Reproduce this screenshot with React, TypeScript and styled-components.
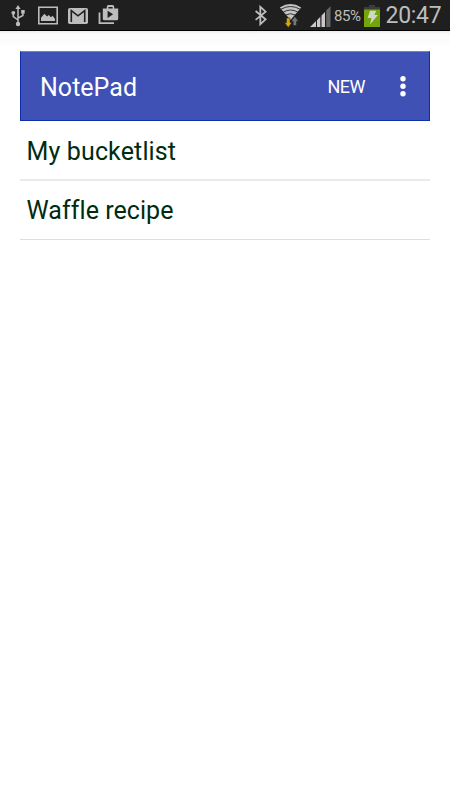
import React from "react";
import styled, { createGlobalStyle } from "styled-components";

const GlobalStyle = createGlobalStyle`
  * { box-sizing: border-box; }
  body { margin: 0; background: #fff; font-family: Roboto, sans-serif; }
`;

const Screen = styled.div`
  width: 450px;
  height: 800px;
  display: flex;
  flex-direction: column;
  overflow: hidden;
  background: linear-gradient(#ececec 31px, #fafafa 34px, #fdfdfd 44px, #fff 48px);
`;

const StatusBar = styled.header`
  height: 31px;
  flex: none;
  display: flex;
  justify-content: space-between;
  padding: 0 9px 0 8px;
  background: #1f1f1f;
  border-bottom: 1px solid #000;
  color: #bdbdbd;
`;

const IconGroup = styled.div`
  display: flex;
  align-items: flex-start;
`;

const Icon = styled.svg`
  display: block;
  flex: none;
`;

const StatusText = styled.span<{ $size: number; $width: number; $gap: number; $spacing?: number }>`
  width: ${({ $width }) => $width}px;
  margin-left: ${({ $gap }) => $gap}px;
  font-size: ${({ $size }) => $size}px;
  letter-spacing: ${({ $spacing = 0 }) => $spacing}px;
  line-height: 32px;
  white-space: nowrap;
`;

const Content = styled.main`
  margin: 20px 20px 0;
`;

const Toolbar = styled.div`
  height: 70px;
  display: flex;
  align-items: center;
  padding: 0 16.5px 0 19px;
  background: #3f51b5;
  border: 1px solid #0d2fae;
  border-top-color: #7380c6;
  color: #fff;
`;

const Title = styled.h1`
  margin: 3px 0 0;
  flex: 1;
  font-size: 25px;
  font-weight: 400;
  line-height: 32px;
  letter-spacing: 0.02px;
`;

const ToolbarButton = styled.button`
  border: 0;
  padding: 0;
  margin: 2px 27.5px 0 0;
  background: none;
  color: inherit;
  font: 400 18px/24px Roboto, sans-serif;
  letter-spacing: -0.5px;
`;

const MenuButton = styled.button`
  display: flex;
  justify-content: center;
  width: 20px;
  padding: 0;
  border: 0;
  background: none;
  color: inherit;
`;

const NoteList = styled.ul`
  margin: 0;
  padding: 0;
  list-style: none;
`;

const NoteItem = styled.li<{ $spacing: number }>`
  height: 59px;
  padding: 0 6.5px;
  border-bottom: 1px solid #dedede;
  color: #002b12;
  font-size: 25px;
  line-height: 59px;
  letter-spacing: ${({ $spacing }) => $spacing}px;

  &:first-child {
    height: 60px;
    padding-top: 1px;
    border-bottom: 2px solid #ebebeb;
  }
`;

const notes = [
  { title: "My bucketlist", spacing: 0.14 },
  { title: "Waffle recipe", spacing: 0.06 },
];

export default function App() {
  return (
    <>
      <GlobalStyle />
      <Screen>
        <StatusBar>
          <IconGroup>
            <Icon width="122" height="30" viewBox="8 0 122 30" fill="#bdbdbd">
              <g stroke="#bdbdbd" strokeWidth="1.5" fill="none">
                <path d="M18 8v16M13.3 13v3.5l4.7 3.5M22.9 11v4.5L18 18.2" />
              </g>
              <path d="M18 5l2.6 4h-5.2z" />
              <circle cx="18" cy="24" r="2.2" />
              <circle cx="13.3" cy="12.8" r="1.9" />
              <path d="M21.2 10h3.5v3.6h-3.5z" />
              <path fillRule="evenodd" d="M38 6.5h20v18H38zM39.6 8.1v14.8h16.8V8.1z" />
              <path d="M41 21v-3.3l3.3-4 2.8 2.7 1.7-1.4 2.1 2.2 1.8-1.4L55 19v2z" />
              <rect x="68" y="8" width="20" height="16" rx="1.8" />
              <path d="M71.3 22V10.7L78 15.8l6.7-5.1V22" fill="none" stroke="#1f1f1f" strokeWidth="1.6" />
              <path fillRule="evenodd" d="M102.8 8.5h4V6.8q0-1.7 1.7-1.7h4q1.7 0 1.7 1.7v1.7h4v10.2q0 1.6-1.6 1.6h-12.2q-1.6 0-1.6-1.6zM108.4 8.5h4.2V6.9h-4.2zM107.6 10.7v7.2l5.5-3.6z" />
              <path d="M99.5 12.5v10.6h14.5" fill="none" stroke="#bdbdbd" strokeWidth="1.8" />
            </Icon>
          </IconGroup>
          <IconGroup>
            <Icon width="81" height="30" viewBox="250 0 81 30">
              <path d="M255.6 11l10 8.3-5.3 4.9V6.8l5.3 4.8-10 8.3" fill="none" stroke="#bdbdbd" strokeWidth="1.8" />
              <path d="M279.8 7.4Q290.5.8 301.2 7.4L290.5 20z" fill="#c4c4c4" />
              <g fill="none" stroke="#242424" strokeWidth=".9">
                <path d="M281 9.2q9.5-5.4 19 0M283.2 12.1q7.3-4.2 14.6 0M285.8 15q4.7-2.6 9.4 0" />
              </g>
              <path d="M286.5 18h3.5v4.5h2l-3.8 5.1-3.7-5.1h2z" fill="#d4a708" stroke="#1f1f1f" strokeWidth=".5" />
              <path d="M293.2 25.5v-4.2h-2l3.6-4.7 3.7 4.7h-2v4.2z" fill="#777" stroke="#1f1f1f" strokeWidth=".5" />
              <path d="M310 27l6-6v6zM317 20.2l3.3-3.4V27H317zM321.5 15.5l3.5-3.5v15h-3.5z" fill="#c9c9c9" />
              <path d="M326.2 10.5l4.3-4.3V27h-4.3z" fill="#656565" />
            </Icon>
            <StatusText $size={15} $width={28} $gap={3} $spacing={-0.4}>85%</StatusText>
            <Icon width="19" height="30" viewBox="362 0 19 30">
              <path d="M369 5h6v2h5v20h-16V7h5z" fill="#3c3d38" />
              <path d="M364 9.5h16V27h-16z" fill="#72a60a" />
              <path d="M370 10.8h6.2l-1.8 4.3h3.5L370 24.5l1.5-6.5h-3.9z" fill="#d2d7ca" />
            </Icon>
            <StatusText $size={23} $width={55.5} $gap={4.5} $spacing={-0.3}>20:47</StatusText>
          </IconGroup>
        </StatusBar>
        <Content>
          <Toolbar>
            <Title>NotePad</Title>
            <ToolbarButton>NEW</ToolbarButton>
            <MenuButton aria-label="More options">
              <Icon width="6" height="22" viewBox="0 0 6 22" fill="currentColor">
                <circle cx="3" cy="3.7" r="2.7" />
                <circle cx="3" cy="11.2" r="2.7" />
                <circle cx="3" cy="18.7" r="2.7" />
              </Icon>
            </MenuButton>
          </Toolbar>
          <NoteList>
            {notes.map((note) => (
              <NoteItem key={note.title} $spacing={note.spacing}>{note.title}</NoteItem>
            ))}
          </NoteList>
        </Content>
      </Screen>
    </>
  );
}
